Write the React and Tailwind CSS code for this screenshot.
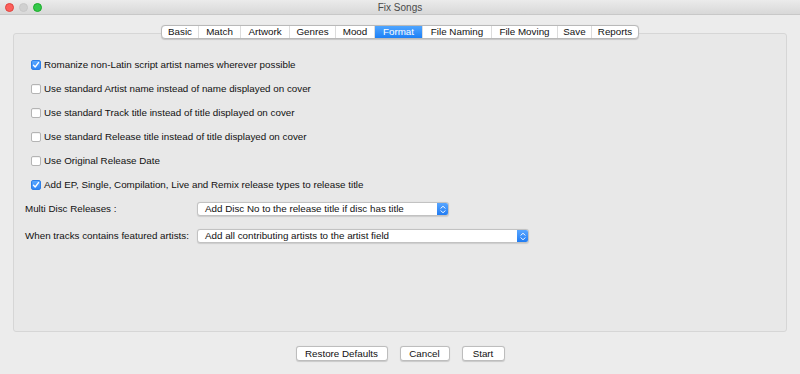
import { useState } from "react";

const TABS = [
  { name: "Basic", w: "w-[36px]" },
  { name: "Match", w: "w-[42px]" },
  { name: "Artwork", w: "w-[49px]" },
  { name: "Genres", w: "w-[46px]" },
  { name: "Mood", w: "w-[39px]" },
  { name: "Format", w: "w-[48px]" },
  { name: "File Naming", w: "w-[69px]" },
  { name: "File Moving", w: "w-[66px]" },
  { name: "Save", w: "w-[34px]" },
  { name: "Reports", w: "w-[47px]" },
];

const OPTIONS = [
  { label: "Romanize non-Latin script artist names wherever possible", on: true },
  { label: "Use standard Artist name instead of name displayed on cover", on: false },
  { label: "Use standard Track title instead of title displayed on cover", on: false },
  { label: "Use standard Release title instead of title displayed on cover", on: false },
  { label: "Use Original Release Date", on: false },
  { label: "Add EP, Single, Compilation, Live and Remix release types to release title", on: true },
];

function Checkbox({ checked, onClick }) {
  if (checked)
    return (
      <span
        onClick={onClick}
        className="flex h-[10px] w-[10px] shrink-0 items-center justify-center rounded-[2px] border border-[#2f7fe6] bg-gradient-to-b from-[#5aa8ff] to-[#2f86f6]"
      >
        <svg width="8" height="8" viewBox="0 0 8 8" fill="none">
          <path d="M1.5 4.2 L3.2 6 L6.5 1.6" stroke="white" strokeWidth="1.4" strokeLinecap="round" strokeLinejoin="round" />
        </svg>
      </span>
    );
  return (
    <span
      onClick={onClick}
      className="h-[10px] w-[10px] shrink-0 rounded-[2px] border border-[#b4b4b4] bg-white shadow-[inset_0_1px_0_rgba(0,0,0,0.05)]"
    />
  );
}

function Select({ value, w }) {
  return (
    <div className={`flex h-[14px] ${w} items-stretch rounded-[3px] border border-[#c2c2c2] bg-white shadow-[0_0.5px_1px_rgba(0,0,0,0.12)]`}>
      <span className="flex-1 truncate pl-[7px] leading-[12px]">{value}</span>
      <span className="flex w-[11px] items-center justify-center rounded-r-[2px] bg-gradient-to-b from-[#58a6ff] to-[#1f7cf3]">
        <svg width="6" height="9" viewBox="0 0 6 9" fill="none">
          <path d="M1 3.2 L3 1.2 L5 3.2 M1 5.8 L3 7.8 L5 5.8" stroke="white" strokeWidth="1" strokeLinecap="round" strokeLinejoin="round" />
        </svg>
      </span>
    </div>
  );
}

export default function App() {
  const [opts, setOpts] = useState(OPTIONS.map((o) => o.on));
  const [tab, setTab] = useState("Format");

  return (
    <div
      className="flex h-[374px] w-[800px] flex-col overflow-hidden bg-[#ececec] text-[9.8px] text-[#111]"
      style={{ fontFamily: '"Liberation Sans", Arial, sans-serif' }}
    >
      {/* Title bar */}
      <div className="flex h-[15px] shrink-0 items-center border-b border-[#c8c8c8] bg-gradient-to-b from-[#ebebeb] to-[#d8d8d8] px-[5px]">
        <div className="flex w-[60px] items-center gap-[5px]">
          <span className="h-[9px] w-[9px] rounded-full border border-[#e0443e] bg-[#fc605c]" />
          <span className="h-[9px] w-[9px] rounded-full border border-[#c8c8c8] bg-[#d0d0d0]" />
          <span className="h-[9px] w-[9px] rounded-full border border-[#1aab29] bg-[#34c84a]" />
        </div>
        <div className="flex-1 text-center text-[10px] text-[#4a4a4a]">Fix Songs</div>
        <div className="w-[60px]" />
      </div>

      <div className="flex flex-1 flex-col px-[13px] pt-[10px]">
        {/* Tabs */}
        <div className="relative z-10 flex justify-center">
          <div className="flex h-[14px] overflow-hidden rounded-[4px] border border-[#b9b9b9] bg-white shadow-[0_0.5px_1px_rgba(0,0,0,0.15)]">
            {TABS.map((t, i) => (
              <button
                key={t.name}
                onClick={() => setTab(t.name)}
                className={`${t.w} flex items-center justify-center leading-none ${
                  i > 0 ? "border-l border-[#dcdcdc]" : ""
                } ${
                  tab === t.name
                    ? "bg-gradient-to-b from-[#4ea5ff] to-[#1b80f6] text-white border-[#1b80f6]"
                    : "text-[#111]"
                }`}
              >
                {t.name}
              </button>
            ))}
          </div>
        </div>

        {/* Panel */}
        <div className="-mt-[6px] flex h-[299px] flex-col rounded-[3px] border border-[#d6d6d6] bg-[#e8e8e8] pl-[11px] pt-[19px]">
          <div className="flex flex-col pl-[6px]">
            {OPTIONS.map((o, i) => (
              <label key={i} className="flex h-[24px] items-center gap-[3px]">
                <Checkbox
                  checked={opts[i]}
                  onClick={() => setOpts(opts.map((v, j) => (j === i ? !v : v)))}
                />
                <span>{o.label}</span>
              </label>
            ))}
          </div>

          <div className="mt-[5px] flex flex-col gap-[13px]">
            <div className="flex h-[14px] items-center">
              <span className="w-[172px]">Multi Disc Releases :</span>
              <Select value="Add Disc No to the release title if disc has title" w="w-[252px]" />
            </div>
            <div className="flex h-[14px] items-center">
              <span className="w-[172px]">When tracks contains featured artists:</span>
              <Select value="Add all contributing artists to the artist field" w="w-[332px]" />
            </div>
          </div>
        </div>

        {/* Buttons */}
        <div className="mt-[14px] flex justify-center gap-[12px]">
          <button className="h-[15px] w-[92px] rounded-[3px] border border-[#bdbdbd] bg-white leading-none shadow-[0_0.5px_1px_rgba(0,0,0,0.15)]">
            Restore Defaults
          </button>
          <button className="h-[15px] w-[50px] rounded-[3px] border border-[#bdbdbd] bg-white leading-none shadow-[0_0.5px_1px_rgba(0,0,0,0.15)]">
            Cancel
          </button>
          <button className="h-[15px] w-[43px] rounded-[3px] border border-[#bdbdbd] bg-white leading-none shadow-[0_0.5px_1px_rgba(0,0,0,0.15)]">
            Start
          </button>
        </div>
      </div>
    </div>
  );
}
